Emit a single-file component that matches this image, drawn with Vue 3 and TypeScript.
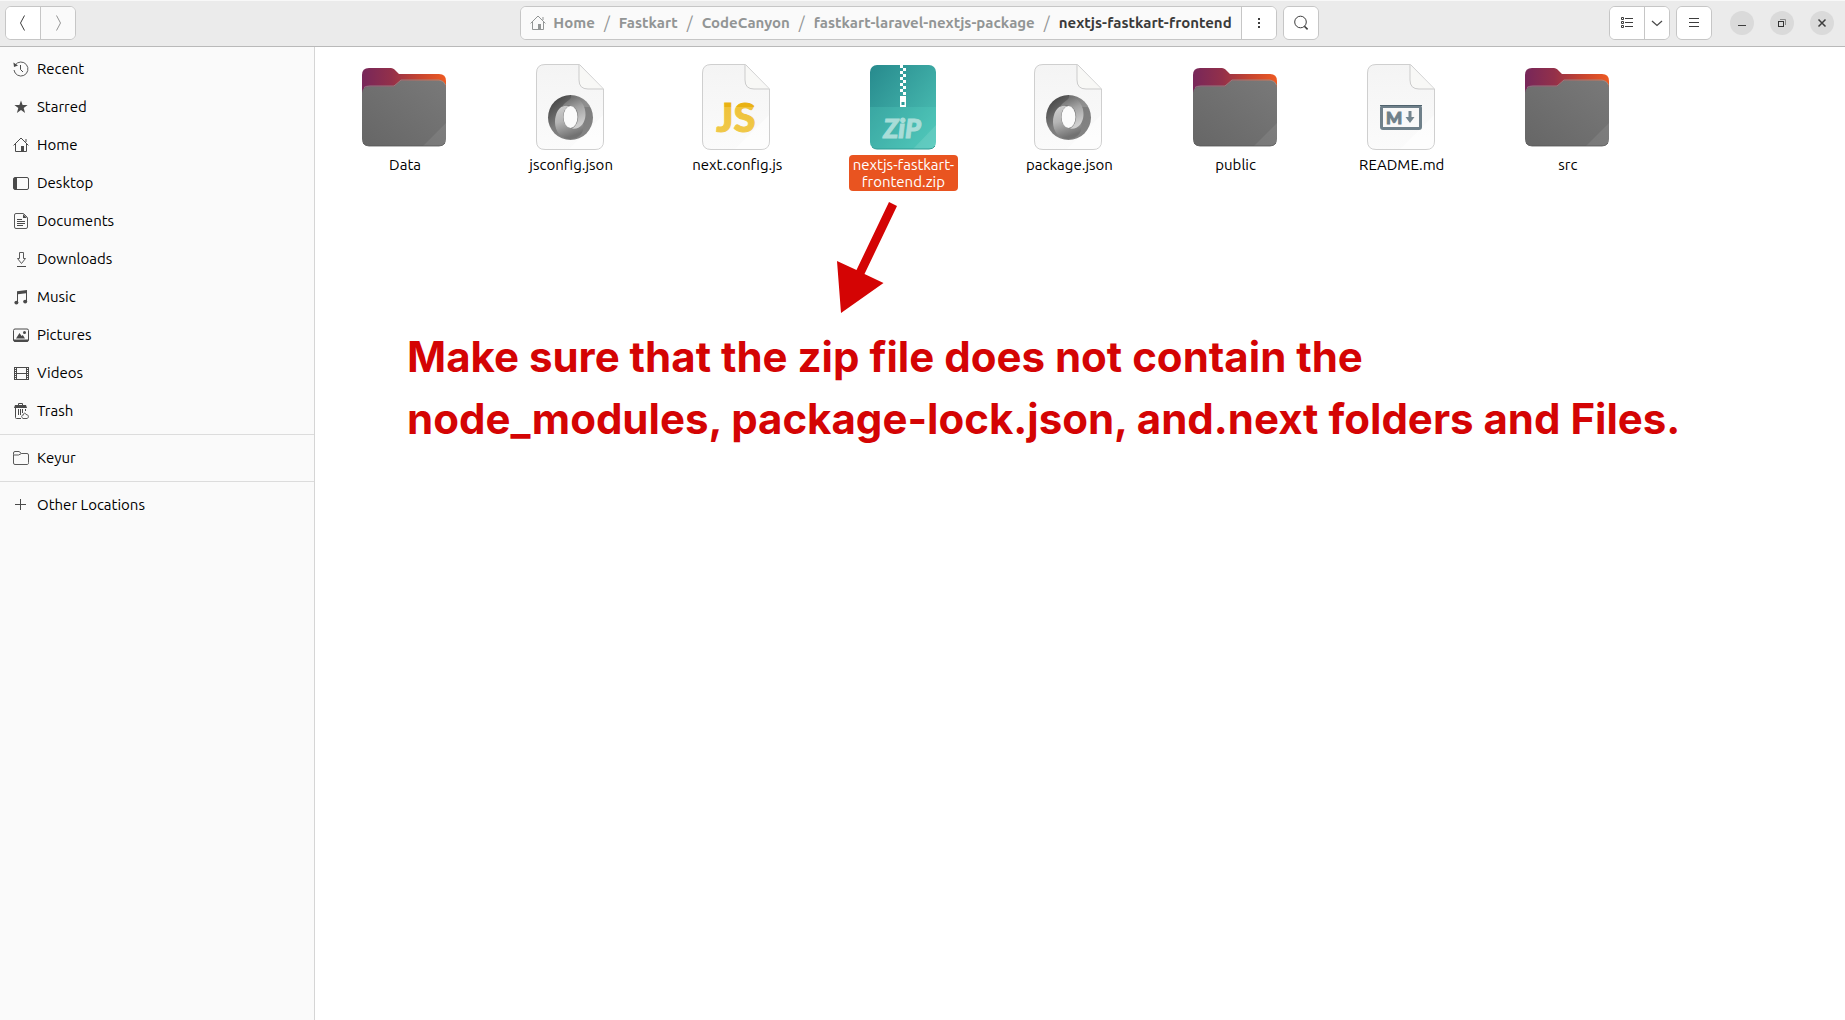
<script setup lang="ts">
interface Place {
  label: string
  icon: string
}
interface Mark {
  text: string
  kind: string
  x: number
  y: number
}
interface FileItem {
  name: string
  lines: string[]
  icon: string
  mark?: Mark
  selected?: boolean
}

const placeGroups: Place[][] = [
  [
    { label: 'Recent', icon: 'recent' },
    { label: 'Starred', icon: 'star' },
    { label: 'Home', icon: 'home' },
    { label: 'Desktop', icon: 'desktop' },
    { label: 'Documents', icon: 'document' },
    { label: 'Downloads', icon: 'download' },
    { label: 'Music', icon: 'music' },
    { label: 'Pictures', icon: 'picture' },
    { label: 'Videos', icon: 'video' },
    { label: 'Trash', icon: 'trash' },
  ],
  [{ label: 'Keyur', icon: 'folder' }],
  [{ label: 'Other Locations', icon: 'plus' }],
]

const crumbs: string[] = [
  'Home',
  'Fastkart',
  'CodeCanyon',
  'fastkart-laravel-nextjs-package',
  'nextjs-fastkart-frontend',
]

const files: FileItem[] = [
  { name: 'Data', lines: ['Data'], icon: 'big-folder' },
  { name: 'jsconfig.json', lines: ['jsconfig.json'], icon: 'big-json' },
  {
    name: 'next.config.js',
    lines: ['next.config.js'],
    icon: 'sheet',
    mark: { text: 'JS', kind: 'js-mark', x: 48, y: 73 },
  },
  {
    name: 'nextjs-fastkart-frontend.zip',
    lines: ['nextjs-fastkart-', 'frontend.zip'],
    icon: 'big-zip',
    mark: { text: 'ZiP', kind: 'zip-mark', x: 48, y: 79 },
    selected: true,
  },
  { name: 'package.json', lines: ['package.json'], icon: 'big-json' },
  { name: 'public', lines: ['public'], icon: 'big-folder' },
  {
    name: 'README.md',
    lines: ['README.md'],
    icon: 'big-md',
    mark: { text: 'M', kind: 'md-mark', x: 41, y: 65 },
  },
  { name: 'src', lines: ['src'], icon: 'big-folder' },
]
</script>

<template>
  <div class="window">
    <svg class="sprite" aria-hidden="true">
      <defs>
        <linearGradient id="tab" x1="0" y1="0" x2="1" y2="0">
          <stop offset="0" stop-color="#77275a" />
          <stop offset="0.35" stop-color="#93304a" />
          <stop offset="0.7" stop-color="#c9462f" />
          <stop offset="1" stop-color="#ee5a22" />
        </linearGradient>
        <linearGradient id="front" x1="0" y1="1" x2="1" y2="0">
          <stop offset="0" stop-color="#666" />
          <stop offset="1" stop-color="#797979" />
        </linearGradient>
        <linearGradient id="paper" x1="0" y1="0" x2="0" y2="1">
          <stop offset="0" stop-color="#f4f4f4" />
          <stop offset="1" stop-color="#fbfbfb" />
        </linearGradient>
        <linearGradient id="ring" x1="0.1" y1="0" x2="0.9" y2="1">
          <stop offset="0" stop-color="#3c3c3c" />
          <stop offset="0.45" stop-color="#7c7c7c" />
          <stop offset="1" stop-color="#858585" />
        </linearGradient>
        <linearGradient id="swirlLeft" x1="0" y1="0" x2="0.3" y2="1">
          <stop offset="0" stop-color="#d2d2d2" />
          <stop offset="0.5" stop-color="#b5b5b5" />
          <stop offset="1" stop-color="#727272" />
        </linearGradient>
        <linearGradient id="swirlRight" x1="0" y1="0" x2="0.3" y2="1">
          <stop offset="0" stop-color="#5c5c5c" />
          <stop offset="0.5" stop-color="#a2a2a2" />
          <stop offset="1" stop-color="#cfcfcf" />
        </linearGradient>
        <linearGradient id="zip" x1="0" y1="0" x2="1" y2="1">
          <stop offset="0" stop-color="#278a8d" />
          <stop offset="1" stop-color="#4fc5b8" />
        </linearGradient>
        <linearGradient id="js" gradientUnits="userSpaceOnUse" x1="0" y1="43" x2="0" y2="73">
          <stop offset="0.15" stop-color="#e9b213" />
          <stop offset="0.16" stop-color="#efc23a" />
          <stop offset="1" stop-color="#f0c848" />
        </linearGradient>
      </defs>

      <symbol id="i-recent" viewBox="0 0 16 16">
        <path d="M2.2 4A7 7 0 1 1 1 9" fill="none" stroke="#5a5a5a" />
        <path d="M0.4 1.6 L1 6 L5 4.6 Z" fill="#4a4a4a" />
        <path d="M7.5 4 V8.5 L10 11" fill="none" stroke="#4a4a4a" />
      </symbol>
      <symbol id="i-star" viewBox="0 0 16 16">
        <path
          d="M8 1.4 L9.6 6 L14.6 6.1 L10.7 9 L12.1 14 L8 11.1 L3.9 14 L5.3 9 L1.4 6.1 L6.4 6 Z"
          fill="#4a4a4a"
        />
      </symbol>
      <symbol id="i-home" viewBox="0 0 16 16">
        <path
          d="M0.6 8.4 L8 1 L15.4 8.4 M2.5 7 V14.5 H13.5 V7 M13 2 V5"
          fill="none"
          stroke="currentColor"
        />
        <path d="M8 9 H11 V15 H8 Z" fill="currentColor" />
      </symbol>
      <symbol id="i-desktop" viewBox="0 0 16 16">
        <rect x="0.5" y="2.5" width="15" height="12" rx="1.5" fill="none" stroke="#4a4a4a" />
        <rect x="1" y="3" width="3" height="11" fill="#4a4a4a" />
      </symbol>
      <symbol id="i-document" viewBox="0 0 16 16">
        <path
          d="M3 0.5 H10.5 L14.5 4.5 V14 A1.5 1.5 0 0 1 13 15.5 H3 A1.5 1.5 0 0 1 1.5 14 V2 A1.5 1.5 0 0 1 3 0.5 Z"
          fill="none"
          stroke="#5a5a5a"
        />
        <path d="M10 1 V5 H14 Z" fill="#4a4a4a" />
        <path d="M4 6.5 H9 M4 8.5 H12 M4 10.5 H12 M4 12.5 H10" stroke="#4a4a4a" />
      </symbol>
      <symbol id="i-download" viewBox="0 0 16 16">
        <path
          d="M6.5 1.5 H10.5 V7.5 H12.5 L8.5 12.5 L4.5 7.5 H6.5 Z"
          fill="none"
          stroke="#5a5a5a"
        />
        <path d="M4 15.5 H13" stroke="#4a4a4a" />
      </symbol>
      <symbol id="i-music" viewBox="0 0 16 16">
        <path d="M4 2.2 L14 1 V12 H13 V4.2 L5 5.2 V13.5 H4 Z" fill="#4a4a4a" />
        <ellipse cx="3.4" cy="13.6" rx="2" ry="1.9" fill="#4a4a4a" />
        <ellipse cx="12.2" cy="12.6" rx="2" ry="1.9" fill="#4a4a4a" />
      </symbol>
      <symbol id="i-picture" viewBox="0 0 16 16">
        <rect x="0.5" y="2" width="15" height="12.5" rx="1.5" fill="none" stroke="#4a4a4a" />
        <path d="M1 13.5 H15" stroke="#4a4a4a" stroke-width="2" />
        <path d="M3 11.5 L6.5 6 L8.6 9 L9.8 8 L12 11.5 Z" fill="#4a4a4a" />
        <circle cx="11.5" cy="5.5" r="1.5" fill="#4a4a4a" />
      </symbol>
      <symbol id="i-video" viewBox="0 0 16 16">
        <path d="M3.5 2 V15 M13.5 2 V15 M3.5 2.5 H13.5 M3.5 8.5 H13.5 M3.5 14.5 H13.5" stroke="#4a4a4a" />
        <path d="M1.5 2 V15 M15.5 2 V15" stroke="#4a4a4a" />
        <path d="M2.5 2 V15 M14.5 2 V15" stroke="#4a4a4a" stroke-dasharray="1 1" />
      </symbol>
      <symbol id="i-trash" viewBox="0 0 16 16">
        <path d="M5.5 2 V0.5 H9.5 V2" fill="none" stroke="#4a4a4a" />
        <path d="M2 2 H13 L14 5 H1 Z" fill="#4a4a4a" />
        <path d="M2.5 5 V14.5 A1 1 0 0 0 3.5 15.5 H8 M5.5 6 V12 M7.5 6 V12 M9.5 6 V10 M12.5 6 V8" fill="none" stroke="#4a4a4a" />
        <path
          d="M10 15.5 C7.5 14 9 11.5 10.5 12 C10.5 9.5 12.5 9.5 13 11.5 C16 11.5 16 15 14 15.5 Z"
          fill="#fafafa"
          stroke="#5a5a5a"
        />
      </symbol>
      <symbol id="i-folder" viewBox="0 0 16 16">
        <path
          d="M0.5 4.5 V3 A1.5 1.5 0 0 1 2 1.5 H6 L8.5 3.5 H14 A1.5 1.5 0 0 1 15.5 5 V12.5 A1.5 1.5 0 0 1 14 14.5 H2 A1.5 1.5 0 0 1 0.5 13 Z M0.5 5 H5.5 L8.5 3.5"
          fill="none"
          stroke="#5a5a5a"
        />
      </symbol>
      <symbol id="i-plus" viewBox="0 0 16 16">
        <path d="M2 7.5 H13 M7.5 2 V13" stroke="#4a4a4a" />
      </symbol>
      <symbol id="i-back" viewBox="0 0 16 16">
        <path d="M9.5 0.5 L5.5 8 L9.5 15.5" fill="none" stroke="currentColor" />
      </symbol>
      <symbol id="i-forward" viewBox="0 0 16 16">
        <path d="M6.5 0.5 L10.5 8 L6.5 15.5" fill="none" stroke="currentColor" />
      </symbol>
      <symbol id="i-dots" viewBox="0 0 16 16">
        <path d="M7 3 H9 V5 H7 Z M7 7 H9 V9 H7 Z M7 11 H9 V13 H7 Z" fill="#3d3d3d" />
      </symbol>
      <symbol id="i-search" viewBox="0 0 16 16">
        <circle cx="7.5" cy="7" r="5.8" fill="none" stroke="#3d3d3d" />
        <path d="M11.4 11.2 L14.6 14.4" stroke="#3d3d3d" stroke-width="1.6" />
      </symbol>
      <symbol id="i-list" viewBox="0 0 16 16">
        <path
          d="M2.5 2.5 H4.5 V4.5 H2.5 Z M2.5 6.5 H4.5 V8.5 H2.5 Z M2.5 10.5 H4.5 V12.5 H2.5 Z M6 3.5 H14 M6 7.5 H14 M6 11.5 H14"
          fill="none"
          stroke="#3d3d3d"
        />
      </symbol>
      <symbol id="i-down" viewBox="0 0 16 16">
        <path d="M3 6 L8 10.5 L13 6" fill="none" stroke="#4a4a4a" stroke-width="1.3" />
      </symbol>
      <symbol id="i-menu" viewBox="0 0 16 16">
        <path d="M3 3.5 H13 M3 7.5 H13 M3 11.5 H13" stroke="#3d3d3d" />
      </symbol>
      <symbol id="i-minimize" viewBox="0 0 16 16">
        <path d="M4 10.5 H12" stroke="#3d3d3d" />
      </symbol>
      <symbol id="i-restore" viewBox="0 0 16 16">
        <path d="M6 4.5 H11.5 V10" fill="none" stroke="#8a8a8a" />
        <rect x="4.5" y="6.5" width="5" height="5" fill="none" stroke="#333" />
      </symbol>
      <symbol id="i-close" viewBox="0 0 16 16">
        <path d="M4.5 4.5 L11.5 11.5 M11.5 4.5 L4.5 11.5" stroke="#3d3d3d" stroke-width="1.5" />
      </symbol>

      <symbol id="i-sheet" viewBox="0 0 96 96">
        <path
          d="M23 5.5 H57.5 L81.5 30 V82 Q81.5 90.5 73 90.5 H23 Q14.5 90.5 14.5 82 V14 Q14.5 5.5 23 5.5 Z"
          fill="url(#paper)"
          stroke="#cfcfcf"
        />
        <path d="M81 56 V82 Q81 90 73 90 H47 Z" fill="#fff" opacity="0.5" />
        <path d="M57 6 V21 Q57 30 66 30 H81" fill="#f8f8f6" stroke="#cbcbcb" />
      </symbol>
      <symbol id="i-big-folder" viewBox="0 0 96 96">
        <path
          d="M13 9 H35 Q37 9 38.5 10.5 L43 15 H83 Q90 15 90 22 V50 H6 V16 Q6 9 13 9 Z"
          fill="url(#tab)"
        />
        <path
          d="M14 27.5 H38 L45 21.5 H83 Q90 22 90 29 V80 Q90 87 83 87 H13 Q6 87 6 80 V34 Q6 27.5 14 27.5 Z"
          fill="url(#front)"
        />
        <path d="M90 64 V80 Q90 87 83 87 H67 Z" fill="#fff" opacity="0.08" />
        <path d="M8 28.5 Q10 27 14 27 H38 L45 21 H83 Q88 21.5 89.5 26" fill="none" stroke="#999" stroke-width="0.7" />
        <path d="M7 84 Q9 87 13 87 H83 Q87 87 89 84" fill="none" stroke="#555" stroke-width="0.8" />
      </symbol>
      <symbol id="i-big-json" viewBox="0 0 96 96">
        <use href="#i-sheet" />
        <g transform="translate(1 0)">
          <circle cx="47.5" cy="58.5" r="22.5" fill="url(#ring)" />
          <path d="M48 36 A22.5 22.5 0 0 1 68.5 48 H48 Z" fill="#fff" opacity="0.14" />
          <path
            d="M46 47 C37 44 32 54 32 63 C32 73 38 79 46 80 C58 80 62 72 60 64 C57 69 52 71 47 69 C38 66 38 51 46 47 Z"
            fill="url(#swirlLeft)"
          />
          <path
            d="M48 37 C58 38 63 48 62.5 56 C62 65 56 71 49 69.5 C57 66 58 49 48 47 Q44 45 39 48 C42 42 49 41 48 37 Z"
            fill="url(#swirlRight)"
          />
          <ellipse cx="47.5" cy="58" rx="7" ry="11" fill="#fbfbfb" />
        </g>
      </symbol>
      <symbol id="i-big-zip" viewBox="0 0 96 96">
        <g transform="translate(1 0)">
          <rect x="15" y="6" width="66" height="84" rx="7" fill="url(#zip)" />
          <path d="M15 48 H81 V83 Q81 90 74 90 H22 Q15 90 15 83 Z" fill="#5fe0cf" opacity="0.2" />
          <path d="M81 66 V83 Q81 90 74 90 H58 Z" fill="#fff" opacity="0.1" />
          <path
            d="M45 6 H48 V9 H45 Z M48 9 H51 V12 H48 Z M45 12 H48 V15 H45 Z M48 15 H51 V18 H48 Z M45 18 H48 V21 H45 Z M48 21 H51 V24 H48 Z M45 24 H48 V27 H45 Z M48 27 H51 V30 H48 Z M45 30 H48 V33 H45 Z M48 33 H51 V36 H48 Z"
            fill="#fff"
          />
          <path d="M45 37 H51 V48 H45 Z" fill="#fff" />
          <rect x="46.5" y="43" width="3" height="3" fill="#2f9b98" />
          <path d="M17 88 Q19 90 22 90 H74 Q78 90 80 87" fill="none" stroke="#2f9b94" />
        </g>
      </symbol>
      <symbol id="i-big-md" viewBox="0 0 96 96">
        <use href="#i-sheet" />
        <g transform="translate(1 0)">
          <rect x="27.5" y="47.5" width="39" height="22" rx="1.5" fill="none" stroke="#6f808a" stroke-width="3" />
          <path d="M26 46.5 H68" stroke="#50636e" />
          <path d="M54.5 52 H57.5 V58 H60.5 L56 64 L51.5 58 H54.5 Z" fill="#74858f" />
        </g>
      </symbol>
    </svg>

    <header class="bar">
      <div class="side">
        <div class="group">
          <button type="button" class="tool" aria-label="Back">
            <svg class="ico"><use href="#i-back" /></svg>
          </button>
          <button type="button" class="tool off" aria-label="Forward" disabled>
            <svg class="ico"><use href="#i-forward" /></svg>
          </button>
        </div>
      </div>

      <div class="middle">
        <div class="group">
          <nav class="path" aria-label="Path">
            <template v-for="(crumb, i) in crumbs" :key="crumb">
              <span v-if="i > 0" class="slash">/</span>
              <a href="#" class="crumb" :class="{ current: i === crumbs.length - 1 }">
                <svg v-if="i === 0" class="ico"><use href="#i-home" /></svg>
                {{ crumb }}
              </a>
            </template>
          </nav>
          <button type="button" class="tool" aria-label="Folder menu">
            <svg class="ico"><use href="#i-dots" /></svg>
          </button>
        </div>
        <div class="group">
          <button type="button" class="tool" aria-label="Search">
            <svg class="ico"><use href="#i-search" /></svg>
          </button>
        </div>
      </div>

      <div class="side end">
        <div class="group">
          <button type="button" class="tool" aria-label="List view">
            <svg class="ico"><use href="#i-list" /></svg>
          </button>
          <button type="button" class="tool narrow" aria-label="View options">
            <svg class="ico"><use href="#i-down" /></svg>
          </button>
        </div>
        <div class="group">
          <button type="button" class="tool" aria-label="Menu">
            <svg class="ico"><use href="#i-menu" /></svg>
          </button>
        </div>
        <div class="controls">
          <button type="button" class="round" aria-label="Minimize">
            <svg class="ico"><use href="#i-minimize" /></svg>
          </button>
          <button type="button" class="round" aria-label="Restore">
            <svg class="ico"><use href="#i-restore" /></svg>
          </button>
          <button type="button" class="round" aria-label="Close">
            <svg class="ico"><use href="#i-close" /></svg>
          </button>
        </div>
      </div>
    </header>

    <div class="body">
      <aside class="sidebar">
        <ul v-for="(group, g) in placeGroups" :key="g" class="places">
          <li v-for="place in group" :key="place.label">
            <a href="#" class="place">
              <svg class="ico"><use :href="'#i-' + place.icon" /></svg>
              {{ place.label }}
            </a>
          </li>
        </ul>
      </aside>

      <main class="content">
        <ul class="files">
          <li v-for="file in files" :key="file.name" class="file">
            <svg class="thumb" viewBox="0 0 96 96" aria-hidden="true">
              <use :href="'#i-' + file.icon" />
              <text
                v-if="file.mark"
                :x="file.mark.x"
                :y="file.mark.y"
                :class="file.mark.kind"
                text-anchor="middle"
              >{{ file.mark.text }}</text>
            </svg>
            <span class="name" :class="{ selected: file.selected }">
              <template v-for="(line, n) in file.lines" :key="line"><br v-if="n > 0" />{{ line }}</template>
            </span>
          </li>
        </ul>

        <div class="note">
          <svg class="arrow" viewBox="0 0 60 112" aria-hidden="true">
            <path d="M52 0 L60 4 L27.5 72 L46.5 81 L4 111 L0 59 L19.5 68 Z" fill="#d40404" />
          </svg>
          <p class="warning">
            Make sure that the zip file does not contain the<br />
            node_modules, package-lock.json, and.next folders and Files.
          </p>
        </div>
      </main>
    </div>
  </div>
</template>

<style>
body {
  margin: 0;
  background: #fff;
}
</style>

<style scoped>
.window {
  min-height: 100vh;
  display: flex;
  flex-direction: column;
  font-family: Ubuntu, "Noto Sans", sans-serif;
  font-size: 15px;
  color: #000;
}

.sprite {
  position: absolute;
  width: 0;
  height: 0;
}

.ico {
  width: 16px;
  height: 16px;
  flex: none;
}

.bar {
  display: grid;
  grid-template-columns: 1fr auto 1fr;
  align-items: center;
  box-sizing: border-box;
  height: 47px;
  padding: 0 11px 1px 5px;
  border-top: 1px solid #f8f8f8;
  border-bottom: 1px solid #b9b9b9;
  background: #ebebeb;
}

.side,
.middle {
  display: flex;
  align-items: center;
  gap: 6px;
}

.end {
  justify-content: flex-end;
}

.group {
  display: flex;
  box-sizing: border-box;
  height: 34px;
  border: 1px solid #c6c6c6;
  border-radius: 6px;
  background: #fff;
  overflow: hidden;
}

.tool {
  display: flex;
  align-items: center;
  justify-content: center;
  width: 34px;
  padding: 0;
  border: 0;
  background: #fff;
  color: #3d3d3d;
}

.tool + .tool,
.path + .tool {
  width: 35px;
  border-left: 1px solid #c6c6c6;
}

.tool + .tool.narrow {
  width: 25px;
}

.tool.off {
  background: #fafafa;
  color: #959595;
}

.path {
  display: flex;
  align-items: center;
  padding: 0 9px;
  background: #fafafa;
}

.crumb {
  display: flex;
  align-items: center;
  gap: 7px;
  font-weight: 700;
  line-height: 20px;
  color: #929595;
  text-decoration: none;
  white-space: nowrap;
}

.crumb.current {
  color: #3a3a3a;
}

.slash {
  width: 24px;
  text-align: center;
  font-size: 16px;
  color: #929595;
}

.controls {
  display: flex;
  gap: 16px;
  margin-left: 12px;
}

.round {
  display: flex;
  align-items: center;
  justify-content: center;
  width: 24px;
  height: 24px;
  padding: 0;
  border: 0;
  border-radius: 50%;
  background: #dadada;
}

.body {
  display: flex;
  flex: 1;
}

.sidebar {
  flex: none;
  width: 314px;
  padding-top: 3px;
  border-right: 1px solid #d5d5d5;
  background: #fafafa;
}

.places {
  margin: 0;
  padding: 0;
  list-style: none;
}

.places + .places {
  margin-top: 4px;
  padding-top: 4px;
  border-top: 1px solid #dcdcdc;
}

.place {
  display: flex;
  align-items: flex-start;
  gap: 8px;
  box-sizing: border-box;
  height: 38px;
  padding: 10px 0 0 13px;
  line-height: 17px;
  color: #000;
  text-decoration: none;
}

.place .ico {
  margin-top: 1px;
  color: #4a4a4a;
}

.content {
  flex: 1;
  min-width: 0;
}

.files {
  display: grid;
  grid-template-columns: repeat(auto-fill, minmax(166px, 1fr));
  margin: 0;
  padding: 12px 28px 0 7px;
  list-style: none;
}

.file {
  display: flex;
  flex-direction: column;
  align-items: center;
}

.thumb {
  width: 96px;
  height: 96px;
  margin-right: 2px;
}

.name {
  padding: 1px 4px;
  border-radius: 4px;
  line-height: 17px;
  text-align: center;
}

.name.selected {
  background: #e95420;
  color: #fff;
}

.js-mark {
  font: 900 40px Lato, sans-serif;
  fill: url(#js);
  stroke: url(#js);
  stroke-width: 1px;
}

.zip-mark {
  font: italic 900 27px Lato, sans-serif;
  fill: #a9ddd8;
  stroke: #a9ddd8;
  stroke-width: 1px;
}

.md-mark {
  font: 900 17px Lato, sans-serif;
  fill: #6f808a;
  stroke: #6f808a;
  stroke-width: 1px;
}

.note {
  padding: 11px 0 0 92px;
}

.arrow {
  display: block;
  width: 60px;
  height: 112px;
  margin-left: 430px;
}

.warning {
  margin: 12px 0 0;
  font-family: Inter, sans-serif;
  font-size: 42px;
  font-weight: 700;
  line-height: 62px;
  color: #d40404;
}
</style>
